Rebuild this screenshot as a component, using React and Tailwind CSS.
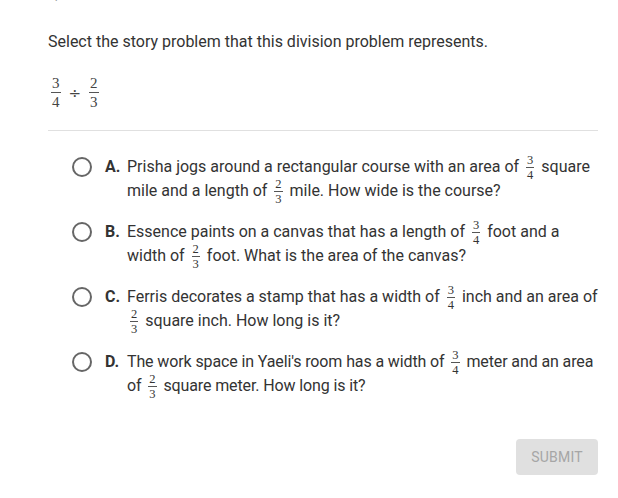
import React from "react";

function Frac({ n, d, big }) {
  return (
    <span
      className={`inline-flex flex-col items-center align-middle leading-none mx-[3px] tracking-normal ${big ? "text-[15px]" : "text-[12.5px] -my-[5px]"}`}
      style={{ fontFamily: '"Liberation Serif", "DejaVu Serif", serif' }}
    >
      <span className="px-[1px] pb-[1px]">{n}</span>
      <span className="self-stretch h-px bg-[#555]" />
      <span className={big ? "px-[1px] pt-[2px]" : "px-[1px] pt-[1px]"}>{d}</span>
    </span>
  );
}

const options = [
  {
    l: "A.",
    t: "",
    c: (
      <>
        Prisha jogs around a rectangular course with an area of <Frac n="3" d="4" /> square mile and a length of <Frac n="2" d="3" /> mile. How wide is the course?
      </>
    ),
  },
  {
    l: "B.",
    t: "",
    c: (
      <>
        Essence paints on a canvas that has a length of <Frac n="3" d="4" /> foot and a width of <Frac n="2" d="3" /> foot. What is the area of the canvas?
      </>
    ),
  },
  {
    l: "C.",
    t: "",
    c: (
      <>
        Ferris decorates a stamp that has a width of <Frac n="3" d="4" /> inch and an area of <Frac n="2" d="3" /> square inch. How long is it?
      </>
    ),
  },
  {
    l: "D.",
    t: "tracking-[-0.12px]",
    c: (
      <>
        The work space in Yaeli's room has a width of <Frac n="3" d="4" /> meter and an area of <Frac n="2" d="3" /> square meter. How long is it?
      </>
    ),
  },
];

export default function App() {
  return (
    <div
      className="w-[618px] h-[498px] bg-white text-[#333] overflow-hidden"
      style={{ fontFamily: 'Roboto, "Noto Sans", sans-serif' }}
    >
      <div className="px-[48px] w-[618px]">
        <div className="-mt-[14px] h-[16px] text-[15px] font-bold text-[#555] leading-[16px]">Question 10 of 10</div>
        <p className="mt-[30px] text-[16px] leading-[20px]">Select the story problem that this division problem represents.</p>
        <div className="mt-[26px] flex items-center h-[30px] text-[#444]">
          <Frac n="3" d="4" big />
          <span className="mx-[5px] text-[15px]" style={{ fontFamily: '"DejaVu Serif", serif' }}>÷</span>
          <Frac n="2" d="3" big />
        </div>
        <div className="mt-[22px] h-px bg-[#e0e0e0] w-[550px]" />
        <div className="mt-[24px] flex flex-col gap-[17px] pl-[24px] w-[560px]">
          {options.map((o) => (
            <div key={o.l} className="flex items-start">
              <span className="mt-[2px] w-[20px] h-[20px] rounded-full border-2 border-[#666] shrink-0" />
              <span className="ml-[13px] w-[22px] shrink-0 font-bold text-[16px] leading-[24px]">{o.l}</span>
              <span className={`text-[16px] leading-[24px] w-[472px] shrink-0 ${o.t}`}>{o.c}</span>
            </div>
          ))}
        </div>
        <div className="flex justify-end w-[550px] mt-[41px]">
          <button className="w-[82px] h-[36px] rounded-[4px] bg-[#e0e0e0] text-[#a6a6a6] text-[14px] tracking-[0.2px]">SUBMIT</button>
        </div>
      </div>
    </div>
  );
}
